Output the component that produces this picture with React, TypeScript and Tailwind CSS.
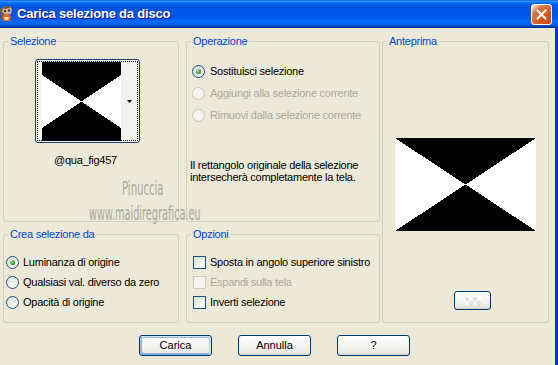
import React from 'react';

const ui = "font-['Liberation_Sans',Arial,sans-serif]";

type GroupProps = { label: string; className?: string; children?: React.ReactNode };

// XP style group box: legend sits on the top border
function Group({ label, className = '', children }: GroupProps) {
  return (
    <fieldset className={`rounded-[3px] border border-[#d0d0bf] ${className}`}>
      <legend className="ml-[4px] px-[2px] text-[11px] leading-[13px] text-[#0046d5]">{label}</legend>
      {children}
    </fieldset>
  );
}

function Radio({ checked, disabled }: { checked?: boolean; disabled?: boolean }) {
  return (
    <span
      className={`flex h-[13px] w-[13px] shrink-0 items-center justify-center rounded-full border ${
        disabled ? 'border-[#cac8bb] bg-[#f4f3ee]' : 'border-[#1c5180] bg-[linear-gradient(135deg,#dcdcd7,#ffffff)]'
      }`}
    >
      {checked && (
        <span className="h-[5px] w-[5px] rounded-full bg-[radial-gradient(circle_at_35%_35%,#a8eea8,#21a121_60%,#0e7a0e)]" />
      )}
    </span>
  );
}

function Check({ disabled }: { disabled?: boolean }) {
  return (
    <span
      className={`h-[13px] w-[13px] shrink-0 border ${
        disabled ? 'border-[#cac8bb] bg-[#f4f3ee]' : 'border-[#1c5180] bg-[linear-gradient(135deg,#dcdcd7,#ffffff)]'
      }`}
    />
  );
}

function XpButton({ label, isDefault, className = '', children }: { label?: string; isDefault?: boolean; className?: string; children?: React.ReactNode }) {
  return (
    <button
      className={`flex items-center justify-center rounded-[3px] border border-[#003c74] bg-[linear-gradient(180deg,#ffffff,#ecebe6_86%,#d6d0c5)] text-[11px] text-black ${
        isDefault
          ? 'shadow-[inset_-1px_1px_#cee7ff,inset_1px_2px_#98b8ea,inset_-2px_2px_#bcd4f6,inset_1px_-1px_#89ade4,inset_2px_-2px_#89ade4]'
          : ''
      } ${className}`}
    >
      {label}
      {children}
    </button>
  );
}

function Hourglass({ w, h, crop = 0 }: { w: number; h: number; crop?: number }) {
  // crop = how far the side black edge reaches down (thumbnail shows a cropped middle)
  const cx = w / 2;
  const cy = h / 2;
  return (
    <svg width={w} height={h} viewBox={`0 0 ${w} ${h}`} className="block" shapeRendering="crispEdges">
      <rect width={w} height={h} fill="#ffffff" />
      <polygon points={`0,0 ${w},0 ${w},${crop} ${cx},${cy} 0,${crop}`} fill="#000" />
      <polygon points={`0,${h} ${w},${h} ${w},${h - crop} ${cx},${cy} 0,${h - crop}`} fill="#000" />
    </svg>
  );
}

function AppIcon() {
  return (
    <svg width="14" height="18" viewBox="0 0 14 18">
      <path d="M3 2 L9 1 L12 4 L11 9 L6 10 L2 7 Z" fill="#e8b270" />
      <path d="M3 2 L9 1 L10 3 L4 4 Z" fill="#7a4a1e" />
      <circle cx="5" cy="6" r="1.2" fill="#1c3f9a" />
      <circle cx="9" cy="5.5" r="1.2" fill="#1c3f9a" />
      <path d="M2 10 L7 9 L11 11 L10 16 L3 16 Z" fill="#e26a1c" />
      <path d="M4 12 L9 12 L8 15 L5 15 Z" fill="#f5e2b8" />
      <path d="M0 4 L2 3 L3 14 L1 15 Z" fill="#8a5a2a" />
    </svg>
  );
}

export default function App() {
  return (
    <div className={`relative flex h-[365px] w-[558px] flex-col overflow-hidden ${ui}`}>
      {/* Title bar */}
      <div className="flex h-[28px] shrink-0 items-center bg-[linear-gradient(180deg,#0058ee_0%,#3593ff_4%,#288eff_6%,#127dff_8%,#036ffc_10%,#0262ee_14%,#0057e5_20%,#0054e3_24%,#0055eb_56%,#005bf5_66%,#026afe_76%,#0062ef_86%,#0052d6_92%,#0040ab_94%,#003092_100%)] pr-[6px]">
        <div className="flex h-[18px] w-[14px] items-center">
          <AppIcon />
        </div>
        <span className="ml-[3px] text-[13px] font-bold tracking-[-0.2px] text-white [text-shadow:1px_1px_#0f1089]">
          Carica selezione da disco
        </span>
        <div className="ml-auto flex h-[21px] w-[21px] items-center justify-center rounded-[3px] border border-white bg-[radial-gradient(circle_at_90%_90%,#cc4600_0%,#dc6527_55%,#cd7546_70%,#ffccb2_90%,#ffffff_100%)]">
          <svg width="11" height="11" viewBox="0 0 11 11">
            <path d="M1.5 1.5 L9.5 9.5 M9.5 1.5 L1.5 9.5" stroke="#fff" strokeWidth="2" strokeLinecap="square" />
          </svg>
        </div>
      </div>

      {/* Body */}
      <div className="flex flex-1 flex-col border-r-[3px] border-[#0831d9] bg-[#ece9d8] pt-[7px] text-[11px] tracking-[-0.25px] text-black">
        <div className="flex pl-[3px]">
          {/* Left column */}
          <div className="flex w-[176px] flex-col gap-[6px]">
            <Group label="Selezione" className="h-[187px]">
              <div className="ml-[31px] mt-[11px] flex h-[84px] w-[105px] items-center rounded-[3px] border border-[#1c3f6e] bg-[#f6f5f0] p-[1px]">
                <div className="flex h-full w-full items-center border border-dotted border-black pl-[4px]">
                  <Hourglass w={79} h={79} crop={13} />
                  <div className="flex h-full flex-1 items-center justify-center bg-[#f4f3ee]">
                    <svg width="5" height="3" viewBox="0 0 5 3">
                      <path d="M0 0 H5 L2.5 3 Z" fill="#000" />
                    </svg>
                  </div>
                </div>
              </div>
              <div className="ml-[29px] mt-[11px] w-[105px] text-center leading-[13px]">@qua_fig457</div>
            </Group>

            <Group label="Crea selezione da" className="h-[95px]">
              <div className="mt-[11px] flex flex-col pl-[2px]">
                <label className="flex h-[20px] items-center gap-[4px]">
                  <Radio checked />
                  <span>Luminanza di origine</span>
                </label>
                <label className="flex h-[20px] items-center gap-[4px]">
                  <Radio />
                  <span>Qualsiasi val. diverso da zero</span>
                </label>
                <label className="flex h-[20px] items-center gap-[4px]">
                  <Radio />
                  <span>Opacità di origine</span>
                </label>
              </div>
            </Group>
          </div>

          {/* Middle column */}
          <div className="ml-[7px] flex w-[194px] flex-col gap-[6px]">
            <Group label="Operazione" className="h-[187px]">
              <div className="ml-[5px] mt-[12px] flex flex-col">
                <label className="flex h-[22px] items-center gap-[5px]">
                  <Radio checked />
                  <span>Sostituisci selezione</span>
                </label>
                <label className="flex h-[22px] items-center gap-[5px] text-[#aca899]">
                  <Radio disabled />
                  <span>Aggiungi alla selezione corrente</span>
                </label>
                <label className="flex h-[22px] items-center gap-[5px] text-[#aca899]">
                  <Radio disabled />
                  <span>Rimuovi dalla selezione corrente</span>
                </label>
              </div>
              <p className="ml-[3px] mt-[33px] leading-[12px]">
                Il rettangolo originale della selezione
                <br />
                intersecherà completamente la tela.
              </p>
            </Group>

            <Group label="Opzioni" className="h-[95px]">
              <div className="ml-[6px] mt-[11px] flex flex-col">
                <label className="flex h-[20px] items-center gap-[4px]">
                  <Check />
                  <span>Sposta in angolo superiore sinistro</span>
                </label>
                <label className="flex h-[20px] items-center gap-[4px] text-[#aca899]">
                  <Check disabled />
                  <span>Espandi sulla tela</span>
                </label>
                <label className="flex h-[20px] items-center gap-[4px]">
                  <Check />
                  <span>Inverti selezione</span>
                </label>
              </div>
            </Group>
          </div>

          {/* Right column */}
          <Group label="Anteprima" className="ml-[2px] h-[288px] w-[167px]">
            <div className="flex flex-col items-center">
              <div className="mt-[90px]">
                <Hourglass w={141} h={93} />
              </div>
              <XpButton className="ml-[14px] mt-[60px] h-[19px] w-[37px]">
                <div className="grid grid-cols-4 opacity-60">
                  {Array.from({ length: 8 }).map((_, i) => (
                    <span
                      key={i}
                      className={`h-[4px] w-[4px] ${(i + Math.floor(i / 4)) % 2 === 0 ? 'bg-[#d8d8d8]' : 'bg-white'}`}
                    />
                  ))}
                </div>
              </XpButton>
            </div>
          </Group>
        </div>

        {/* Dialog buttons */}
        <div className="mt-[12px] flex gap-[26px] pl-[139px] tracking-normal">
          <XpButton label="Carica" isDefault className="h-[21px] w-[73px]" />
          <XpButton label="Annulla" className="h-[21px] w-[73px]" />
          <XpButton label="?" className="h-[21px] w-[73px]" />
        </div>
      </div>

      {/* Watermark */}
      <div className="pointer-events-none absolute left-[89px] top-[178px] font-['DejaVu_Sans_Condensed','DejaVu_Sans',sans-serif] text-[#a9a89c]">
        <div className="ml-[33px] origin-left scale-x-[0.56] text-[20px] leading-[20px]">Pinuccia</div>
        <div className="mt-[5px] origin-left scale-x-[0.57] whitespace-nowrap text-[19px] leading-[20px]">www.maidiregrafica.eu</div>
      </div>
    </div>
  );
}
